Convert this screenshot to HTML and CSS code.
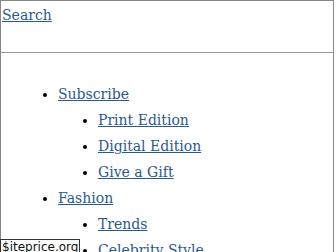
FILE: index.html
```html
<!DOCTYPE html>
<html lang="en">
<head>
    <meta charset="UTF-8">
    <meta name="viewport" content="width=device-width, initial-scale=1.0">
    <title>Menu</title>
    <link rel="stylesheet" href="styles.css">
</head>
<body>
    <div class="page">
        <div class="search-bar">
            <a href="#">Search</a>
        </div>

        <ul class="menu">
            <li><a href="#">Subscribe</a>
                <ul>
                    <li><a href="#">Print Edition</a></li>
                    <li><a href="#">Digital Edition</a></li>
                    <li><a href="#">Give a Gift</a></li>
                </ul>
            </li>
            <li><a href="#">Fashion</a>
                <ul>
                    <li><a href="#">Trends</a></li>
                    <li><a href="#">Celebrity Style</a></li>
                </ul>
            </li>
        </ul>
    </div>

    <div class="watermark">$iteprice.org</div>
</body>
</html>
```

FILE: styles.css
```css
/* Menu page */
body {
    margin: 0;
    font-family: "DejaVu Serif", Georgia, serif;
    font-size: 14px;
    background: #fff;
}

a {
    color: #2a5a8c;
}

.page {
    width: 334px;
    height: 260px;
    box-sizing: border-box;
    border: 1px solid #888;
    border-bottom: none;
}

.search-bar {
    height: 52px;
    box-sizing: border-box;
    padding: 5px 1px 0;
    line-height: 18px;
    border-bottom: 1px solid #999;
}

.menu {
    margin: 28px 0 0;
    padding-left: 57px;
    line-height: 26px;
    list-style: disc;
}

.menu ul {
    margin: 0;
    padding-left: 40px;
    list-style: disc;
}

.watermark {
    position: absolute;
    left: 0;
    top: 239px;
    padding: 0 1px;
    border: 1px solid #333;
    background: #fff;
    font-family: "DejaVu Sans", sans-serif;
    font-size: 12px;
    line-height: 15px;
    color: #111;
}
```
